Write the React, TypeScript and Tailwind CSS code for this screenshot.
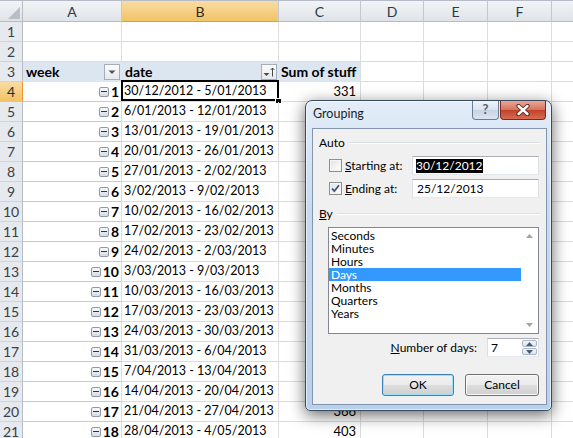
import clsx from 'clsx'

// values hidden behind the dialog are left blank
const rows: [number, string, number | null][] = [
  [1, '30/12/2012 - 5/01/2013', 331],
  [2, '6/01/2013 - 12/01/2013', null],
  [3, '13/01/2013 - 19/01/2013', null],
  [4, '20/01/2013 - 26/01/2013', null],
  [5, '27/01/2013 - 2/02/2013', null],
  [6, '3/02/2013 - 9/02/2013', null],
  [7, '10/02/2013 - 16/02/2013', null],
  [8, '17/02/2013 - 23/02/2013', null],
  [9, '24/02/2013 - 2/03/2013', null],
  [10, '3/03/2013 - 9/03/2013', null],
  [11, '10/03/2013 - 16/03/2013', null],
  [12, '17/03/2013 - 23/03/2013', null],
  [13, '24/03/2013 - 30/03/2013', null],
  [14, '31/03/2013 - 6/04/2013', null],
  [15, '7/04/2013 - 13/04/2013', null],
  [16, '14/04/2013 - 20/04/2013', null],
  [17, '21/04/2013 - 27/04/2013', 366],
  [18, '28/04/2013 - 4/05/2013', 403],
]

const cols = ['A', 'B', 'C', 'D', 'E', 'F', 'G']

function ColHeader({ label, active }: { label: string; active?: boolean }) {
  return (
    <div
      className={clsx(
        'flex items-center justify-center border-t border-r border-b text-[14px]',
        active
          ? 'bg-[linear-gradient(#f9dca4,#f2c366)] border-t-[#b5bcc5] border-r-[#c3c8cf] border-b-[#f29436] text-[#2b2b2b]'
          : 'bg-[linear-gradient(#f2f4f6,#dfe3e8)] border-t-[#b5bcc5] border-r-[#c3c8cf] border-b-[#b5bcc5] text-[#2b3a4a]'
      )}
    >
      {label === 'G' ? '' : label}
    </div>
  )
}

function RowHeader({ n, active }: { n: number; active?: boolean }) {
  return (
    <div
      className={clsx(
        'flex items-center justify-center border-r border-b text-[14px]',
        active
          ? 'bg-[linear-gradient(#f9dca4,#f2c366)] border-r-[#f29436] border-b-[#c3c8cf] text-[#2b2b2b]'
          : 'bg-[#e6e9ed] border-r-[#b5bcc5] border-b-[#cfd4da] text-[#3a3f46]'
      )}
    >
      {n}
    </div>
  )
}

function FilterButton({ sorted }: { sorted?: boolean }) {
  return (
    <span className="w-[16px] h-[16px] border border-[#a5adb8] bg-[linear-gradient(#fbfbfc,#e6e9ed)] flex items-center justify-center">
      <svg width="14" height="14" viewBox="0 0 14 14">
        {sorted ? (
          <>
            <polygon points="1.5,8 7.5,8 4.5,11" fill="#4a4a4a" />
            <path d="M10.5 3 L10.5 11.5 M8.6 5 L10.5 3 L12.4 5" stroke="#4a4a4a" strokeWidth="1" fill="none" />
          </>
        ) : (
          <polygon points="3.5,5.5 10.5,5.5 7,9" fill="#555" />
        )}
      </svg>
    </span>
  )
}

function MinusBox() {
  return (
    <span className="w-[10px] h-[10px] rounded-[2px] border border-[#8d99aa] bg-[linear-gradient(#f7f8fa,#d6dce4)] flex items-center justify-center">
      <span className="w-[6px] h-[1px] bg-[#2e3440]" />
    </span>
  )
}

function Sheet() {
  return (
    <div className="grid grid-cols-[23px_99px_157px_82px_63px_64px_64px_61px] grid-rows-[22px_repeat(21,20px)] font-['Lato',sans-serif] text-black">
      <div className="relative border-t border-r border-b border-t-[#b5bcc5] border-r-[#b5bcc5] border-b-[#b5bcc5] bg-[linear-gradient(#f2f4f6,#dfe3e8)]">
        <svg className="absolute right-[2px] bottom-[2px]" width="12" height="12" viewBox="0 0 12 12">
          <polygon points="12,0 12,12 0,12" fill="#b9bec6" />
        </svg>
      </div>
      {cols.map((c) => (
        <ColHeader key={c} label={c} active={c === 'B'} />
      ))}

      {[1, 2].map((n) => (
        <Row key={n} n={n} />
      ))}

      <RowHeader n={3} />
      <div className="flex items-center justify-between bg-[#dce6f1] border-r border-b border-r-[#dce6f1] border-b-[#dce6f1] pl-[3px] pr-[1px] text-[14px] font-bold">
        <span>week</span>
        <FilterButton />
      </div>
      <div className="flex items-center justify-between bg-[#dce6f1] border-r border-b border-r-[#dce6f1] border-b-[#dce6f1] pl-[3px] pr-[1px] text-[14px] font-bold">
        <span>date</span>
        <FilterButton sorted />
      </div>
      <div className="flex items-center bg-[#dce6f1] border-r border-b border-r-[#dadcdd] border-b-[#dce6f1] pl-[2px] text-[14px] font-bold whitespace-nowrap">
        Sum of stuff
      </div>
      {[0, 1, 2, 3].map((i) => (
        <div key={i} className="border-r border-b border-[#dadcdd]" />
      ))}

      {rows.map(([w, d, v], i) => (
        <Row key={w} n={i + 4} week={w} date={d} value={v} selected={i === 0} />
      ))}
    </div>
  )
}

function Row({ n, week, date, value, selected }: { n: number; week?: number; date?: string; value?: number | null; selected?: boolean }) {
  return (
    <>
      <RowHeader n={n} active={selected} />
      <div
        className={clsx(
          'flex items-center justify-end gap-[2px] pr-[2px] border-r border-b border-r-[#dadcdd]',
          week ? 'border-b-[#b8cce4]' : 'border-b-[#dadcdd]'
        )}
      >
        {week && (
          <>
            <MinusBox />
            <span className="text-[14px] font-bold">{week}</span>
          </>
        )}
      </div>
      <div className="relative flex items-center pl-[2px] border-r border-b border-[#dadcdd] text-[12.5px] whitespace-nowrap">
        {date}
        {selected && (
          <>
            <div className="absolute left-[-1px] top-[-2px] right-[-1px] bottom-0 border-2 border-black" />
            <div className="absolute right-[-4px] bottom-[-3px] w-[7px] h-[6px] bg-black border border-white" />
          </>
        )}
      </div>
      <div className="flex items-center justify-end pr-[4px] border-r border-b border-[#dadcdd] text-[13px]">{value}</div>
      {[0, 1, 2, 3].map((i) => (
        <div key={i} className="border-r border-b border-[#dadcdd]" />
      ))}
    </>
  )
}

function Checkbox({ checked }: { checked?: boolean }) {
  return (
    <span className="w-[13px] h-[13px] border border-[#8e8f8f] bg-[linear-gradient(135deg,#e2e2e2,#ffffff)] shadow-[inset_0_0_0_1px_#f4f4f4] flex items-center justify-center">
      {checked && (
        <svg width="11" height="11" viewBox="0 0 11 11">
          <path d="M2 5.5 L4.3 8.2 L9 2.2" stroke="#3e5080" strokeWidth="1.8" fill="none" />
        </svg>
      )}
    </span>
  )
}

function GroupHeader({ children }: { children: React.ReactNode }) {
  return (
    <div className="h-[16px] flex items-center pl-[6px] pr-[6px]">
      <span>{children}</span>
      <div className="ml-[4px] flex-1 h-[2px] border-t border-b border-t-[#d5dfe5] border-b-white" />
    </div>
  )
}

function WinButton({ children, focused, w }: { children: React.ReactNode; focused?: boolean; w: string }) {
  return (
    <div
      className={clsx(
        'h-[22px] rounded-[3px] border flex items-center justify-center bg-[linear-gradient(#f2f2f2,#ebebeb_48%,#dddddd_52%,#cfcfcf)]',
        w,
        focused ? 'border-[#3c7fb1] shadow-[inset_0_0_0_1px_#9be2f8]' : 'border-[#707070] shadow-[inset_0_0_0_1px_#fbfbfb]'
      )}
    >
      {children}
    </div>
  )
}

const units = ['Seconds', 'Minutes', 'Hours', 'Days', 'Months', 'Quarters', 'Years']

function Dialog() {
  return (
    <div className="absolute left-[305px] top-[100px] w-[247px] h-[311px] rounded-t-[7px] rounded-b-[5px] border border-[#3a4a5c] bg-[linear-gradient(to_bottom,#e3edf8,#c6dbf0_35%,#b8d1ec)] shadow-[inset_0_0_0_1px_rgba(255,255,255,0.55),0_4px_16px_rgba(0,0,0,0.6)] flex flex-col font-['Lato',sans-serif] text-[12px] text-black">
      <div className="h-[27px] flex items-start pl-[7px] pr-[5px]">
        <span className="self-center text-[12.5px] text-[#1e1e1e]">Grouping</span>
        <div className="ml-auto flex gap-px">
          <div className="w-[27px] h-[19px] rounded-b-[4px] border border-t-0 border-[#6b7d93] bg-[linear-gradient(#edf3fa,#d9e3ef_50%,#c7d4e5_50%,#dbe5f1)] flex items-center justify-center text-[13px] font-bold text-[#56606c]">
            ?
          </div>
          <div className="w-[46px] h-[19px] rounded-b-[4px] border border-t-0 border-[#7a2a1e] bg-[linear-gradient(#eaa795,#d77460_48%,#c2432c_52%,#d66c50)] flex items-center justify-center">
            <svg width="16" height="12" viewBox="0 0 16 12">
              <path d="M3.5 2 L12.5 10 M12.5 2 L3.5 10" stroke="#4a2620" strokeWidth="4.2" strokeLinecap="round" />
              <path d="M3.5 2 L12.5 10 M12.5 2 L3.5 10" stroke="#ffffff" strokeWidth="2.4" strokeLinecap="round" />
            </svg>
          </div>
        </div>
      </div>

      <div className="flex-1 ml-[6px] mr-[4px] mb-[5px] border border-[#8396ad] bg-[#f0f0f0] flex flex-col">
        <div className="mt-[6px]">
          <GroupHeader>Auto</GroupHeader>
        </div>

        <div className="mt-[5px] h-[19px] flex items-center pl-[16px] pr-[7px]">
          <Checkbox />
          <span className="ml-[3px]">
            <u>S</u>tarting at:
          </span>
          <div className="ml-auto w-[127px] h-[19px] border border-[#abadb3] border-l-[#dbdfe6] border-r-[#dbdfe6] border-b-[#e3e9ef] bg-white flex items-center pl-[3px]">
            <span className="bg-black text-white leading-[14px]">30/12/2012</span>
          </div>
        </div>

        <div className="mt-[4px] h-[19px] flex items-center pl-[16px] pr-[7px]">
          <Checkbox checked />
          <span className="ml-[3px]">
            <u>E</u>nding at:
          </span>
          <div className="ml-auto w-[127px] h-[19px] border border-[#abadb3] border-l-[#dbdfe6] border-r-[#dbdfe6] border-b-[#e3e9ef] bg-white flex items-center pl-[4px]">
            25/12/2013
          </div>
        </div>

        <div className="mt-[8px]">
          <GroupHeader>
            <u>B</u>y
          </GroupHeader>
        </div>

        <div className="mt-[5px] ml-[15px] w-[211px] h-[107px] border border-[#828790] bg-white flex">
          <div className="flex-1 pt-[1px]">
            {units.map((u) => (
              <div key={u} className={clsx('h-[13px] leading-[13px] pl-[2px]', u === 'Days' && 'bg-[#3399ff] text-white')}>
                {u}
              </div>
            ))}
          </div>
          <div className="w-[17px] flex flex-col justify-between items-center py-[6px]">
            <svg width="7" height="4" viewBox="0 0 7 4">
              <polygon points="0,4 7,4 3.5,0" fill="#a3a3a3" />
            </svg>
            <svg width="7" height="4" viewBox="0 0 7 4">
              <polygon points="0,0 7,0 3.5,4" fill="#a3a3a3" />
            </svg>
          </div>
        </div>

        <div className="mt-[4px] h-[19px] flex items-center justify-end pr-[7px]">
          <span>
            <u>N</u>umber of days:
          </span>
          <div className="ml-[10px] w-[52px] h-[19px] border border-[#abadb3] border-l-[#dbdfe6] border-r-[#dbdfe6] border-b-[#e3e9ef] bg-white flex">
            <span className="flex-1 pl-[3px] flex items-center">7</span>
            <div className="w-[17px] flex flex-col gap-px p-px">
              <div className="flex-1 rounded-[2px] border border-[#a9b7c9] bg-[linear-gradient(#f3f6fa,#dce4ee)] flex items-center justify-center">
                <svg width="7" height="4" viewBox="0 0 7 4">
                  <polygon points="0,4 7,4 3.5,0" fill="#4d5d73" />
                </svg>
              </div>
              <div className="flex-1 rounded-[2px] border border-[#a9b7c9] bg-[linear-gradient(#f3f6fa,#dce4ee)] flex items-center justify-center">
                <svg width="7" height="4" viewBox="0 0 7 4">
                  <polygon points="0,0 7,0 3.5,4" fill="#4d5d73" />
                </svg>
              </div>
            </div>
          </div>
        </div>

        <div className="mt-[17px] flex justify-end gap-[11px] pr-[7px]">
          <WinButton focused w="w-[72px]">OK</WinButton>
          <WinButton w="w-[74px]">Cancel</WinButton>
        </div>
      </div>
    </div>
  )
}

export default function App() {
  return (
    <div className="relative w-[573px] h-[438px] overflow-hidden bg-white">
      <Sheet />
      <Dialog />
    </div>
  )
}
